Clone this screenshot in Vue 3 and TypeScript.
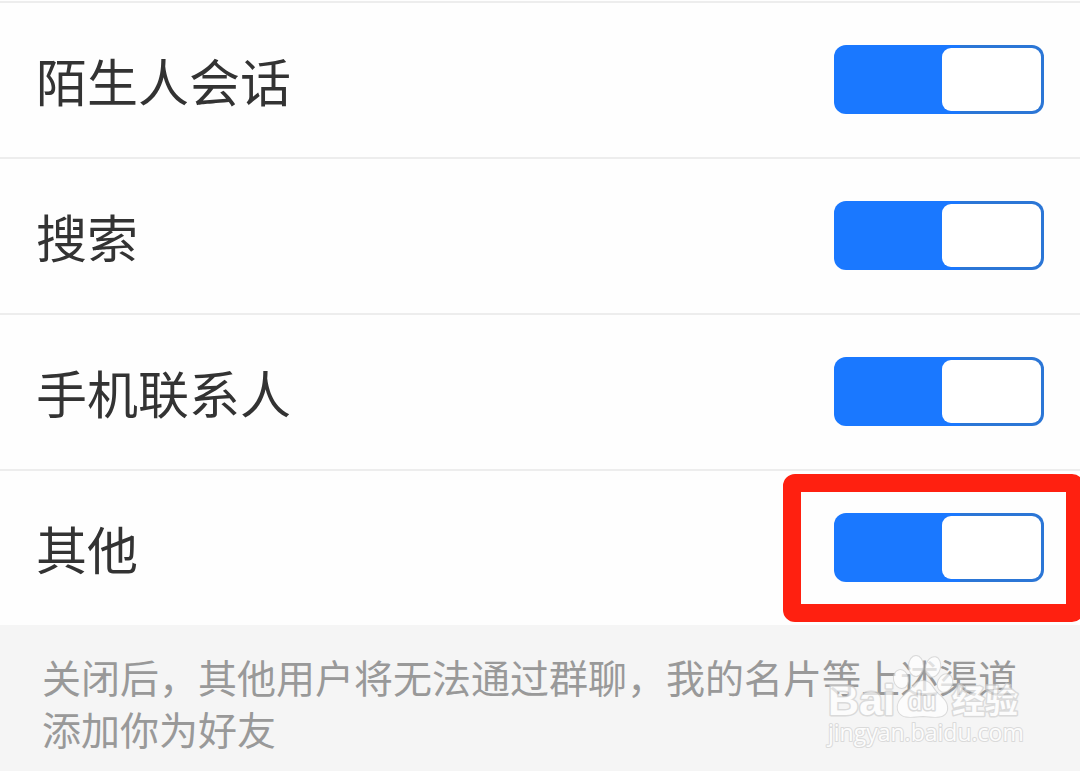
<script setup lang="ts">
import { ref } from 'vue'

interface Channel {
  id: string
  label: string
  enabled: boolean
  marked?: boolean
}

const channels = ref<Channel[]>([
  { id: 'stranger', label: '陌生人会话', enabled: true },
  { id: 'search', label: '搜索', enabled: true },
  { id: 'contacts', label: '手机联系人', enabled: true },
  { id: 'other', label: '其他', enabled: true, marked: true },
])
</script>

<template>
  <main class="page">
    <ul class="list">
      <li v-for="item in channels" :key="item.id" class="row">
        <label class="label" :for="item.id">{{ item.label }}</label>
        <span class="control">
          <input :id="item.id" v-model="item.enabled" class="switch" type="checkbox" role="switch" />
          <span v-if="item.marked" class="marker" aria-hidden="true"></span>
        </span>
      </li>
    </ul>
    <footer class="note">
      <p class="hint">关闭后，其他用户将无法通过群聊，我的名片等上述渠道添加你为好友</p>
      <svg class="watermark" viewBox="0 0 200 112" width="200" height="112" aria-hidden="true">
        <g class="paw">
          <ellipse cx="75" cy="41" rx="7" ry="9" transform="rotate(-12 75 41)" />
          <ellipse cx="90" cy="28" rx="7" ry="10" />
          <ellipse cx="107" cy="29" rx="7" ry="10" transform="rotate(14 107 29)" />
          <ellipse cx="119" cy="45" rx="7" ry="9" transform="rotate(24 119 45)" />
          <path d="M97 43 C89 43 86 51 80 56 C73 62 71 66 72 72 C75 81 85 79 97 78 C108 79 119 81 121 72 C122 65 118 61 112 56 C106 50 105 43 97 43 Z" />
        </g>
        <text class="brand" x="2" y="77" font-size="43">Bai</text>
        <text class="du" x="82" y="72" font-size="25">du</text>
        <text class="brand cjk" x="126" y="75" font-size="33">经验</text>
        <text class="url" x="2" y="103" font-size="23">jingyan.baidu.com</text>
      </svg>
    </footer>
  </main>
</template>

<style>
body {
  margin: 0;
  background: #f5f5f5;
}
</style>

<style scoped>
.page {
  overflow: hidden;
  background: #f5f5f5;
  font-family: "Noto Sans CJK SC", sans-serif;
}

.list {
  margin: 0;
  padding: 1px 0 0;
  list-style: none;
  background: #fefefe;
}

.row {
  display: flex;
  align-items: center;
  justify-content: space-between;
  box-sizing: border-box;
  min-height: 156px;
  padding: 0 36px 1px;
  border-top: 2px solid #ededed;
}

.label {
  color: #333;
  font-size: 51px;
  line-height: 72px;
}

.control {
  position: relative;
  display: flex;
}

.switch {
  display: flex;
  justify-content: flex-start;
  box-sizing: border-box;
  width: 210px;
  height: 69px;
  margin: 0;
  border: 3px solid #2b76d6;
  border-radius: 12px;
  background: #ccc;
  appearance: none;
  cursor: pointer;
}

.switch::before {
  width: 99px;
  border-radius: 9px;
  background: #fff;
  content: "";
}

.switch:checked {
  justify-content: flex-end;
  background: linear-gradient(to right, #1a78ff 60%, #2b76d6 60%) border-box;
  border-color: transparent;
}

.marker {
  position: absolute;
  inset: -39px -40px -40px -51px;
  border: 18px solid #ff2010;
  border-radius: 12px;
  pointer-events: none;
}

.note {
  position: relative;
  padding: 25px 42px 17px;
}

.hint {
  margin: 0;
  color: #999;
  font-size: 39px;
  line-height: 52px;
}

.watermark {
  position: absolute;
  right: 54px;
  bottom: 21px;
  overflow: visible;
  fill: #fff;
  stroke: #cfcfcf;
  stroke-width: 3px;
  stroke-linejoin: round;
  paint-order: stroke;
  opacity: 0.7;
}

.paw {
  stroke-width: 2px;
}

.brand {
  font-family: "Liberation Sans", sans-serif;
  font-weight: 700;
}

.cjk {
  font-family: "Noto Sans CJK SC", sans-serif;
}

.du {
  font-family: "Liberation Sans", sans-serif;
}

.url {
  font-family: "Open Sans", sans-serif;
  stroke-width: 2px;
}
</style>
